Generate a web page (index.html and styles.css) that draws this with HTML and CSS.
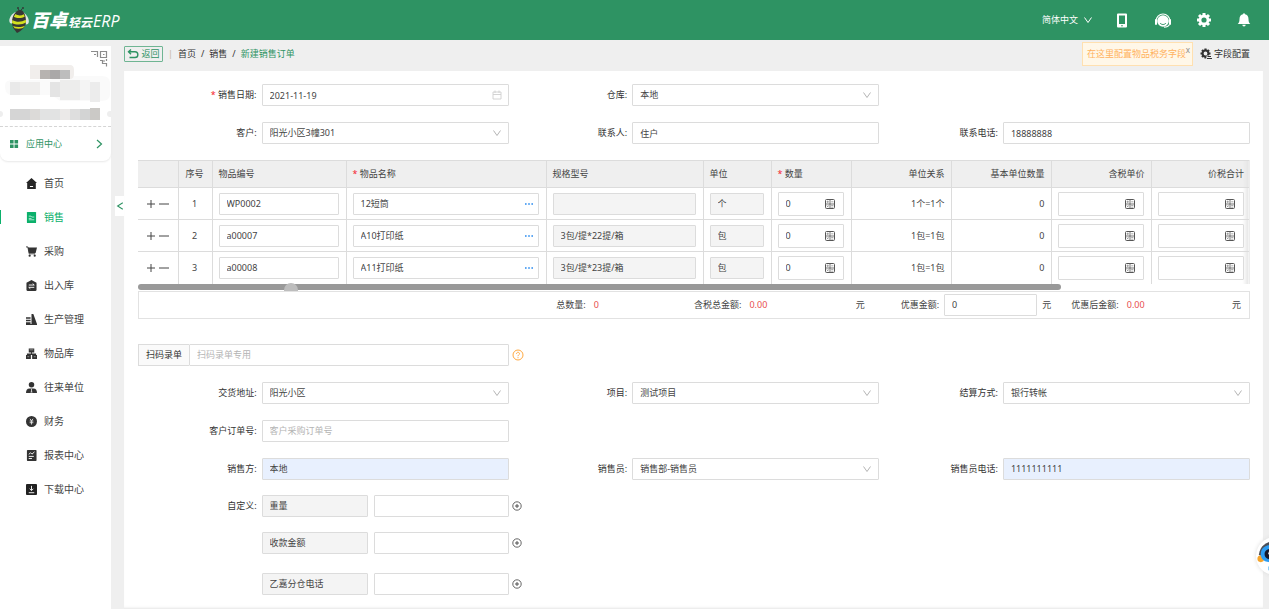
FILE: index.html
```html
<!DOCTYPE html>
<html lang="zh-CN">
<head>
<meta charset="utf-8">
<title>新建销售订单</title>
<link rel="stylesheet" href="styles.css">
</head>
<body>
<svg class="sprite" aria-hidden="true">
  <symbol id="down" viewBox="0 0 10 10"><path d="M1.500 2.500 5 7.500 8.500 2.500" fill="none" stroke="currentColor"/></symbol>
  <symbol id="calc" viewBox="0 0 12 12"><rect x="1.500" y="1.500" width="9" height="9" rx="1" fill="#fff" stroke="#555"/><path d="M6 1.500v9M1.500 6h9" fill="none" stroke="#666" stroke-width=".9"/><path d="M2.500 3.800h2.400M3.700 2.600V5M7.200 3.800h2.200M2.700 7.300l2 2M4.700 7.300l-2 2M7.200 7.500h2.200M7.200 9.200h2.200" fill="none" stroke="#777" stroke-width=".6"/></symbol>
  <symbol id="add" viewBox="0 0 10 10"><circle cx="5" cy="5" r="4.200" fill="none" stroke="#555" stroke-width=".9"/><path d="M5 3v4M3 5h4" stroke="#444" stroke-width=".9"/></symbol>
  <symbol id="plus" viewBox="0 0 10 10"><path d="M5 1v8M1 5h8" stroke="#444"/></symbol>
  <symbol id="minus" viewBox="0 0 10 10"><path d="M0 5h10" stroke="#444"/></symbol>
  <symbol id="dots" viewBox="0 0 10 10"><path d="M1 5h1.600M4.200 5h1.600M7.400 5H9" stroke="#2b8cf0" stroke-width="1.400"/></symbol>
  <symbol id="gear" viewBox="0 0 16 16"><circle cx="8" cy="8" r="4" fill="none" stroke="currentColor" stroke-width="2.800"/><path d="M8 1v2.500M8 12.500V15M1 8h2.500M12.500 8H15M3 3l1.800 1.800M11.200 11.200 13 13M3 13l1.800-1.800M11.200 4.800 13 3" stroke="currentColor" stroke-width="3"/></symbol>
  <symbol id="gearlist" viewBox="0 0 12 12"><circle cx="5.500" cy="5.500" r="2.900" fill="none" stroke="currentColor" stroke-width="2"/><path d="M5.500.5v2M5.500 8.500v2M.5 5.500h2M8.500 5.500h2M2 2l1.300 1.300M2 9l1.300-1.300M7.700 3.300 9 2" stroke="currentColor" stroke-width="2.200"/><path d="M6.500 7.500H12V12H6.500z" fill="#efefef"/><path d="M7.500 8.500H11M7 10.500h5" stroke="currentColor" stroke-width="1.200"/></symbol>
</svg>

<header class="topbar">
  <a class="brand" href="#">
    <svg class="bee" viewBox="0 0 20 28">
      <path d="M10.500 5 9 2.500M11.500 5l1.800-2.500" stroke="#333" stroke-width=".9"/>
      <circle cx="9" cy="2" r=".9" fill="#333"/><circle cx="14" cy="2" r=".9" fill="#333"/>
      <path d="M7 6C3 7 0 12 .3 15c.3 2.500 2.200 3 4 2.200z" fill="#dfe6e2"/>
      <path d="M14 6c3 2 6.200 6 5.800 10-.3 2.500-2.800 3-4 2.100z" fill="#dfe6e2"/>
      <path d="M11 4C7 4 3 10 3 16c0 6 3 8 5 11 4-2 9-6 9-11 0-6-2-12-6-12z" fill="#373735"/>
      <path d="M6.500 8c3 2 5.500 1.800 8.300.2l1 2.300c-3 2-8 2-11 .3zM3.300 14c4 2.400 9 2.400 13.500-.2l.2 2.800c-4 2.500-10 2.600-14 .4zM4 20c3.500 1.500 8.500 1.400 12.300-.5l-2.300 2.500c-2.500.9-5.600 1-8.300.3z" fill="#d2df1f"/>
    </svg>
    <span class="brand-name">百卓</span><span class="brand-sub">轻云</span><span class="brand-erp">ERP</span>
  </a>
  <nav class="tools" aria-label="工具">
    <button class="lang" type="button">简体中文<svg class="i10"><use href="#down"/></svg></button>
    <button type="button" aria-label="手机"><svg class="i16" viewBox="0 0 16 16"><path fill="#fff" fill-rule="evenodd" d="M4 1.500h8q1 0 1 1v12q0 1-1 1H4q-1 0-1-1v-12q0-1 1-1zm1 2v8.500h6V3.500zM8 13a.8.8 0 1 0 0 1.600.8.8 0 0 0 0-1.600z"/></svg></button>
    <button type="button" aria-label="客服"><svg class="i18" viewBox="0 0 18 18"><path d="M2 10a7 7 0 0 1 14 0" fill="none" stroke="#fff" stroke-width="1.200"/><circle cx="9" cy="10" r="5.800" fill="#fff"/><path d="M2 9v4M16 9v4" stroke="#fff" stroke-width="2" stroke-linecap="round"/><path d="M15.500 13.500c-1 2-3 2.700-5.500 2.700" fill="none" stroke="#fff" stroke-width="1.200"/><path d="M6 12c1.500 2 4.500 2 6 0" fill="none" stroke="#2e9363" stroke-width="1"/></svg></button>
    <button type="button" aria-label="设置"><svg class="i16"><use href="#gear"/></svg></button>
    <button type="button" aria-label="通知"><svg class="i16" viewBox="0 0 16 16"><path fill="#fff" d="M7 2.300a1 1 0 0 1 2 0c2.200.5 3.500 2.200 3.500 4.700 0 3 .7 4 1.800 5H1.700c1.100-1 1.800-2 1.800-5C3.500 4.500 4.800 2.800 7 2.300zM6.300 12.800h3.400a1.700 1.700 0 0 1-3.400 0z"/></svg></button>
  </nav>
</header>

<div class="shell">
  <aside class="side">
    <div class="account">
      <svg class="mosaic" viewBox="0 0 111 80">
        <path d="M5 40q0-6 7-6h38l10-4h42q8 0 8 8v10q0 7-8 7H60l-8-6H12q-7 0-7-9z" fill="#fafafa"/>
        <path d="M30 19h40q4 0 4 5v4q0 5-4 5H30z" fill="#f1eeec"/>
        <path d="M40 24h10v9H40z" fill="#b7b3b0"/><path d="M50 24h10v9H50z" fill="#aaa8a8"/><path d="M60 24h10v9H60z" fill="#bdbdbd"/>
        <path d="M10 36h10v13H10z" fill="#e9e9e9"/><path d="M20 36h20v13H20z" fill="#efeeed"/><path d="M50 36h10v15H50z" fill="#e4e4e4"/><path d="M60 34h20v20H60z" fill="#ededec"/><path d="M80 34h10v20H80z" fill="#f4f4f4"/><path d="M90 36h10v20H90z" fill="#ececec"/>
        <path d="M10 63h20v11H10z" fill="#d5d5d5"/><path d="M30 63h10v11H30z" fill="#dcdad8"/><path d="M40 63h20v11H40z" fill="#e2e3e3"/><path d="M60 63h10v11H60z" fill="#ebe9e8"/><path d="M70 63h10v11H70z" fill="#dedede"/><path d="M80 63h10v11H80z" fill="#d3d4d4"/><path d="M90 62h10v12H90z" fill="#cbc9c6"/>
        <circle cx="0" cy="68" r="3" fill="#eee"/><circle cx="110" cy="68" r="3" fill="#eee"/>
        <path d="M91 5.500h6.500v5.500M94 8.500h2M100.500 5.500h6v6h-6zM103 8.500h1.500M100 14.500h2.500v3h4v3M106.500 13v2M103 15h2" fill="none" stroke="#8c8c8c" stroke-width="1.200"/>
      </svg>
    </div>
    <a class="apps" href="#">
      <svg class="i10" viewBox="0 0 10 10"><path fill="#2e9363" d="M1 1h3.600v3.600H1zM5.500 1h3.600v3.600H5.500zM1 5.500h3.600v3.600H1zM5.500 5.500h3.600v3.600H5.500z"/></svg>
      <span>应用中心</span>
      <svg class="i10 apps-arrow" viewBox="0 0 10 10"><path d="M3 1l4.500 4L3 9" fill="none" stroke="#2e9363" stroke-width="1.200"/></svg>
    </a>
    <nav class="menu" aria-label="主菜单">
      <a href="#"><svg viewBox="0 0 12 12"><path fill="#262626" fill-rule="evenodd" d="M6 0 0 5.500h1.300V12h9.400V5.500H12zM4.300 8.800h3.400v1H4.300z"/></svg>首页</a>
      <a href="#" class="on"><svg viewBox="0 0 12 12"><rect x="1" width="10" height="12" rx=".6" fill="#0bb06b"/><path d="M3 4.500h2.500l.8 1H9M3 7h3M3 8.500h6" stroke="#c9f0df" stroke-width=".9" fill="none"/></svg>销售</a>
      <a href="#"><svg viewBox="0 0 12 12"><path d="M0 1h2l1.500 7.500H10" fill="none" stroke="#333"/><path d="M2 1.500h10L10.500 7.500H3.200z" fill="#333"/><circle cx="4" cy="10.500" r="1.200" fill="#333"/><circle cx="9.500" cy="10.500" r="1.200" fill="#333"/></svg>采购</a>
      <a href="#"><svg viewBox="0 0 12 12"><path fill="#333" d="M6 0 .5 3v7.500Q.5 12 2 12h8q1.500 0 1.500-1.500V3z"/><path d="M3 5.500h6L7.300 4M9 8H3l1.700 1.500" stroke="#fff" fill="none"/></svg>出入库</a>
      <a href="#"><svg viewBox="0 0 12 12"><path fill="#333" d="M6 0h2l4 11H6zM0 3.500h5v1.700H0zM0 6.200h5v1.700H0zM0 9h5v2H0zM0 11h12v1H0z"/></svg>生产管理</a>
      <a href="#"><svg viewBox="0 0 12 12"><path fill="#333" d="M3 .5h6V5H3zM0 7.500h5.300V12H0zM6.700 7.500H12V12H6.700zM5.500 5h1v1.500H5.500zM1 6h10v1.500H1z"/><path d="M4 2h4M1.500 9.500h2M8.500 9.500h2" stroke="#aaa" stroke-width=".8"/></svg>物品库</a>
      <a href="#"><svg viewBox="0 0 12 12"><circle cx="6" cy="3" r="3" fill="#333"/><path fill="#333" d="M0 12c0-3 1-5 4-5h4c3 0 4 2 4 5z"/><path d="M6 7.500v3.300M5 11h2" stroke="#fff" stroke-width=".8"/></svg>往来单位</a>
      <a href="#"><svg viewBox="0 0 12 12"><circle cx="6" cy="6" r="6" fill="#333"/><path d="M4.300 3 6 5.300 7.700 3M4 5.500h4M4 7.300h4M6 5.500v3.800" stroke="#eee" stroke-width=".9" fill="none"/></svg>财务</a>
      <a href="#"><svg viewBox="0 0 12 12"><rect x="1" width="10.500" height="12" rx=".8" fill="#333"/><path d="M3 4.800 5 3l1.500 1.500L9.300 2M3 7h5.500M3 9.300h3.500" stroke="#fff" fill="none"/></svg>报表中心</a>
      <a href="#"><svg viewBox="0 0 12 12"><rect width="12" height="12" rx="1" fill="#222"/><path d="M6 2v5M4 5.200l2 2 2-2M3 9.500h6" stroke="#fff" fill="none"/></svg>下载中心</a>
    </nav>
    <button class="fold" type="button" aria-label="收起菜单"><svg class="i8" viewBox="0 0 10 10"><path d="M8.500 1 2 5l6.500 4" fill="none" stroke="#2e9363" stroke-width="1.300"/></svg></button>
  </aside>

  <main class="main">
    <div class="crumbs">
      <button class="back" type="button"><svg class="i12" viewBox="0 0 12 12"><path d="M4 1.500 1.500 3.800 4 6.200M2 3.800h6a2.800 2.800 0 0 1 0 5.700H2.500" fill="none" stroke="#2e9363" stroke-width="1.400"/></svg>返回</button>
      <span class="bar">|</span>
      <a href="#">首页</a><span>/</span><a href="#">销售</a><span>/</span><span class="here">新建销售订单</span>
      <div class="tip">在这里配置物品税务字段<button class="tip-close" type="button" aria-label="关闭">x</button></div>
      <button class="config" type="button"><svg class="i12"><use href="#gearlist"/></svg>字段配置</button>
    </div>

    <form class="panel">
      <div class="fields">
        <div class="field"><label for="date"><i>*</i> 销售日期:</label><div class="box"><input id="date" value="2021-11-19"><svg class="i10 mark" viewBox="0 0 10 10"><path d="M1 2h8v7H1zM1 4.500h8M3 .5v2.500M7 .5v2.500" fill="none" stroke="#cfcfcf" stroke-width=".9"/></svg></div></div>
        <div class="field"><label for="store">仓库:</label><div class="box"><select id="store"><option>本地</option></select><svg class="i10 mark"><use href="#down"/></svg></div></div>
        <div class="field c1"><label for="cust">客户:</label><div class="box"><select id="cust"><option>阳光小区3幢301</option></select><svg class="i10 mark"><use href="#down"/></svg></div></div>
        <div class="field"><label for="contact">联系人:</label><div class="box"><input id="contact" value="住户"></div></div>
        <div class="field"><label for="phone">联系电话:</label><div class="box"><input id="phone" value="18888888"></div></div>
      </div>

      <div class="sheet">
        <table class="items">
          <colgroup><col class="w-op"><col class="w-no"><col class="w-code"><col class="w-name"><col class="w-spec"><col class="w-unit"><col class="w-qty"><col class="w-num"><col class="w-num"><col class="w-num"><col></colgroup>
          <thead><tr><th></th><th class="mid">序号</th><th>物品编号</th><th><i>*</i> 物品名称</th><th>规格型号</th><th>单位</th><th><i>*</i> 数量</th><th class="end">单位关系</th><th class="end">基本单位数量</th><th class="end">含税单价</th><th class="end">价税合计</th></tr></thead>
          <tbody>
            <tr>
              <td><div class="ops"><button type="button" aria-label="添加行"><svg class="i10"><use href="#plus"/></svg></button><button type="button" aria-label="删除行"><svg class="i10"><use href="#minus"/></svg></button></div></td>
              <td class="mid">1</td>
              <td><div class="box"><input aria-label="物品编号" value="WP0002"></div></td>
              <td><div class="box"><input aria-label="物品名称" value="12短筒"><button type="button" aria-label="选择物品"><svg class="i10"><use href="#dots"/></svg></button></div></td>
              <td><div class="box off"><input aria-label="规格型号" disabled></div></td>
              <td><div class="box off"><input aria-label="单位" value="个" disabled></div></td>
              <td><div class="box tall"><input aria-label="数量" value="0"><button type="button" aria-label="计算"><svg class="i12"><use href="#calc"/></svg></button></div></td>
              <td class="end">1个=1个</td><td class="end">0</td>
              <td><div class="box tall"><input aria-label="含税单价"><button type="button" aria-label="计算"><svg class="i12"><use href="#calc"/></svg></button></div></td>
              <td><div class="box tall"><input aria-label="价税合计"><button type="button" aria-label="计算"><svg class="i12"><use href="#calc"/></svg></button></div></td>
            </tr>
            <tr>
              <td><div class="ops"><button type="button" aria-label="添加行"><svg class="i10"><use href="#plus"/></svg></button><button type="button" aria-label="删除行"><svg class="i10"><use href="#minus"/></svg></button></div></td>
              <td class="mid">2</td>
              <td><div class="box"><input aria-label="物品编号" value="a00007"></div></td>
              <td><div class="box"><input aria-label="物品名称" value="A10打印纸"><button type="button" aria-label="选择物品"><svg class="i10"><use href="#dots"/></svg></button></div></td>
              <td><div class="box off"><input aria-label="规格型号" value="3包/提*22提/箱" disabled></div></td>
              <td><div class="box off"><input aria-label="单位" value="包" disabled></div></td>
              <td><div class="box tall"><input aria-label="数量" value="0"><button type="button" aria-label="计算"><svg class="i12"><use href="#calc"/></svg></button></div></td>
              <td class="end">1包=1包</td><td class="end">0</td>
              <td><div class="box tall"><input aria-label="含税单价"><button type="button" aria-label="计算"><svg class="i12"><use href="#calc"/></svg></button></div></td>
              <td><div class="box tall"><input aria-label="价税合计"><button type="button" aria-label="计算"><svg class="i12"><use href="#calc"/></svg></button></div></td>
            </tr>
            <tr>
              <td><div class="ops"><button type="button" aria-label="添加行"><svg class="i10"><use href="#plus"/></svg></button><button type="button" aria-label="删除行"><svg class="i10"><use href="#minus"/></svg></button></div></td>
              <td class="mid">3</td>
              <td><div class="box"><input aria-label="物品编号" value="a00008"></div></td>
              <td><div class="box"><input aria-label="物品名称" value="A11打印纸"><button type="button" aria-label="选择物品"><svg class="i10"><use href="#dots"/></svg></button></div></td>
              <td><div class="box off"><input aria-label="规格型号" value="3包/提*23提/箱" disabled></div></td>
              <td><div class="box off"><input aria-label="单位" value="包" disabled></div></td>
              <td><div class="box tall"><input aria-label="数量" value="0"><button type="button" aria-label="计算"><svg class="i12"><use href="#calc"/></svg></button></div></td>
              <td class="end">1包=1包</td><td class="end">0</td>
              <td><div class="box tall"><input aria-label="含税单价"><button type="button" aria-label="计算"><svg class="i12"><use href="#calc"/></svg></button></div></td>
              <td><div class="box tall"><input aria-label="价税合计"><button type="button" aria-label="计算"><svg class="i12"><use href="#calc"/></svg></button></div></td>
            </tr>
          </tbody>
        </table>
        <div class="track"><div class="thumb"></div><div class="grip"></div></div>
        <div class="sums">
          <div class="sum s1">总数量:<b>0</b></div>
          <div class="sum s2">含税总金额:<b>0.00</b><span class="yuan">元</span></div>
          <div class="sum s3"><label for="cut">优惠金额:</label><div class="box"><input id="cut" value="0"></div><span>元</span></div>
          <div class="sum s4">优惠后金额:<b>0.00</b><span class="yuan">元</span></div>
        </div>
      </div>

      <div class="fields scan-row">
        <div class="scan"><label for="scan">扫码录单</label><div class="box"><input id="scan" placeholder="扫码录单专用"></div></div>
        <button class="side-btn" type="button" aria-label="帮助"><svg class="i12" viewBox="0 0 12 12"><circle cx="6" cy="6" r="5" fill="none" stroke="#ffa940"/><path d="M4.500 4.800C4.500 2.800 7.500 2.800 7.500 4.700 7.500 5.900 6 5.900 6 7.200M6 8.200v1" fill="none" stroke="#ffa940"/></svg></button>
      </div>

      <div class="fields">
        <div class="field"><label for="addr">交货地址:</label><div class="box"><select id="addr"><option>阳光小区</option></select><svg class="i10 mark"><use href="#down"/></svg></div></div>
        <div class="field"><label for="proj">项目:</label><div class="box"><select id="proj"><option>测试项目</option></select><svg class="i10 mark"><use href="#down"/></svg></div></div>
        <div class="field"><label for="pay">结算方式:</label><div class="box"><select id="pay"><option>银行转帐</option></select><svg class="i10 mark"><use href="#down"/></svg></div></div>
        <div class="field c1"><label for="ono">客户订单号:</label><div class="box"><input id="ono" placeholder="客户采购订单号"></div></div>
        <div class="field c1"><label for="seller">销售方:</label><div class="box fill"><input id="seller" value="本地"></div></div>
        <div class="field"><label for="rep">销售员:</label><div class="box"><select id="rep"><option>销售部-销售员</option></select><svg class="i10 mark"><use href="#down"/></svg></div></div>
        <div class="field"><label for="reptel">销售员电话:</label><div class="box fill"><input id="reptel" value="1111111111"></div></div>
      </div>

      <div class="fields custom">
        <div class="field c1"><label for="k1">自定义:</label><div class="pair"><div class="box off"><input id="k1" value="重量" disabled></div><div class="box"><input aria-label="重量"></div></div></div>
        <button class="side-btn" type="button" aria-label="添加"><svg class="i10"><use href="#add"/></svg></button>
        <div class="field c1"><span></span><div class="pair"><div class="box off"><input aria-label="自定义名称" value="收款金额" disabled></div><div class="box"><input aria-label="收款金额"></div></div></div>
        <button class="side-btn" type="button" aria-label="添加"><svg class="i10"><use href="#add"/></svg></button>
        <div class="field c1 apart"><span></span><div class="pair"><div class="box off"><input aria-label="自定义名称" value="乙嘉分仓电话" disabled></div><div class="box"><input aria-label="乙嘉分仓电话"></div></div></div>
        <button class="side-btn apart" type="button" aria-label="添加"><svg class="i10"><use href="#add"/></svg></button>
      </div>
    </form>
  </main>
</div>

<button class="robot" type="button" aria-label="智能客服"><svg viewBox="0 0 40 40"><circle cx="5" cy="23" r="3.500" fill="#f6a52c"/><path d="M3 19C4 9 11 5 20 4v6L7 20z" fill="#4b4f58"/><path d="M5 18C5 10 12 8 20 8s15 2 15 10-7 9-15 9S5 26 5 18z" fill="#2c9cf2"/><path d="M9 18c0-5 5-6 11-6s11 1 11 6-5 6-11 6-11-1-11-6z" fill="#15182b"/><circle cx="15" cy="17" r="2" fill="#fff"/><circle cx="25" cy="17" r="2" fill="#fff"/><path d="M13 31h14v4H13z" fill="#4fb3f6"/></svg></button>
</body>
</html>
```
FILE: styles.css
```css
* { box-sizing: border-box; }
body {
  margin: 0;
  min-height: 100vh;
  display: flex;
  flex-direction: column;
  overflow: hidden;
  background: #efefef;
  color: #444;
  font: 9px/14px "Noto Sans", "Noto Sans CJK SC", sans-serif;
}
a { color: inherit; text-decoration: none; }
i { color: #f5222d; font-style: normal; }
button, input, select { font: inherit; color: inherit; }
button { border: 0; padding: 0; background: none; display: flex; align-items: center; }
svg { display: block; flex: none; }
.sprite { position: absolute; width: 0; height: 0; }
.i8 { width: 8px; height: 8px; }
.i10 { width: 10px; height: 10px; }
.i12 { width: 12px; height: 12px; }
.i16 { width: 16px; height: 16px; }
.i18 { width: 18px; height: 18px; }

/* top bar */
.topbar {
  height: 40px;
  display: flex;
  align-items: center;
  justify-content: space-between;
  padding: 0 17px 0 9px;
  background: #2e9363;
  color: #fff;
}
.brand { display: flex; align-items: baseline; font-style: italic; }
.bee { width: 20px; height: 28px; margin-right: 2px; align-self: flex-start; }
.brand-name { font-size: 18px; line-height: 28px; font-weight: 900; }
.brand-sub { font-size: 12px; font-weight: 700; margin-left: 1px; }
.brand-erp { font-family: "Open Sans", sans-serif; font-size: 16px; margin-left: 1px; }
.tools { display: flex; align-items: center; gap: 24px; }
.tools .lang { gap: 5px; margin-right: -3px; }

/* sidebar */
.shell { flex: 1; display: flex; padding-right: 6px; }
.side { position: relative; flex: none; width: 111px; margin: 6px 13px 0 0; background: #fff; }
.account { border-bottom: 1px dashed #d4d4d4; }
.mosaic { width: 100%; height: 80px; }
.apps {
  display: flex;
  align-items: center;
  height: 34px;
  padding: 0 7px 0 9px;
  gap: 7px;
  color: #2e9363;
  border-radius: 0 0 8px 8px;
  box-shadow: 0 1px 2px #e8e8e8;
}
.apps-arrow { margin-left: auto; }
.menu { padding-top: 5px; font-size: 10px; }
.menu a { display: flex; align-items: center; height: 34px; padding-left: 26px; gap: 7px; }
.menu svg { width: 11px; height: 11px; }
.menu .on { color: #0bb06b; background: linear-gradient(#0bb06b, #0bb06b) left / 1px 14px no-repeat; }
.fold { position: absolute; left: 115px; top: 150px; width: 9px; height: 20px; background: #fff; justify-content: center; }

/* breadcrumb row */
.main { flex: 1; min-width: 0; display: flex; flex-direction: column; }
.crumbs { display: flex; align-items: center; gap: 5px; height: 31px; padding: 0 13px 4px 0; color: #333; }
.back { height: 16px; width: 39px; gap: 2px; justify-content: center; border: 1px solid #6fb593; border-radius: 1px; color: #2e9363; }
.bar { color: #c5b89e; }
.here { color: #2e9363; }
.tip {
  position: relative;
  margin-left: auto;
  padding: 4px 6px 4px 4px;
  border: 1px solid #ffe0b0;
  background: #fff7e8;
  color: #ffb25e;
}
.tip-close { position: absolute; right: 2px; top: 0; color: #888; font-size: 8px; }
.config { gap: 2px; margin-left: 2px; }

/* form panel */
.panel { flex: 1; padding: 13px 13px 14px 14px; background: #fff; box-shadow: inset 0 -3px 3px -2px #e4e4e4; }
.fields { display: grid; grid-template-columns: repeat(3, minmax(0, 1fr)); row-gap: 16px; }
.field { display: grid; grid-template-columns: 1fr 2fr; align-items: center; }
.field label { text-align: right; padding-right: 5px; color: #333; }
.c1 { grid-column: 1; }
.box {
  position: relative;
  display: flex;
  align-items: center;
  min-width: 0;
  height: 22px;
  border: 1px solid #dcdcdc;
  border-radius: 1px;
  background: #fff;
}
.box input, .box select {
  flex: 1;
  min-width: 0;
  width: 100%;
  height: 100%;
  padding: 0 7px;
  border: 0;
  outline: 0;
  appearance: none;
  background: none;
  color: #444;
}
.box input::placeholder { color: #b4b4b4; }
.box button { flex: none; padding-right: 4px; }
.box .mark { position: absolute; right: 6px; color: #b5b5b5; pointer-events: none; }
.off { background: #f4f4f4; }
.fill { background: #e8f0fe; }
.tall { height: 24px; }
.tall button { padding-right: 7px; }

/* item table */
.sheet { margin: 16px 0 25px; }
.items { width: 100%; table-layout: fixed; border-collapse: collapse; border-top: 1px solid #dcdcdc; }
.items th, .items td { padding: 0 7px 0 6px; text-align: left; font-weight: 400; border-right: 1px solid #dcdcdc; }
.items th { height: 27px; background: #efefef; }
.items td { height: 32px; border-top: 1px solid #dcdcdc; }
.items th:last-child, .items td:last-child { padding-right: 5px; border-color: #dcdcdc #ececec; background-image: linear-gradient(to left, #e6e6e6, transparent 6px); }
.items .mid { text-align: center; }
.items .end { text-align: right; padding-right: 6px; }
.w-op { width: 40px; }
.w-no { width: 34px; }
.w-code { width: 134px; }
.w-name { width: 200px; }
.w-spec { width: 157px; }
.w-unit { width: 68px; }
.w-qty { width: 80px; }
.w-num { width: 100px; }
.ops { display: flex; gap: 3px; justify-content: center; }
.track { position: relative; height: 7px; }
.thumb { width: 83%; height: 6px; border-radius: 3px; background: #999; }
.grip { position: absolute; left: 146px; bottom: 0; width: 14px; height: 8px; border-radius: 7px 7px 0 0; background: #bdbdbd; }
.sums {
  display: grid;
  grid-template-columns: 418fr 138fr 171fr 36fr 151fr 20fr 170fr 8fr;
  align-items: center;
  height: 28px;
  border: 1px solid #e2e2e2;
}
.sum { display: flex; align-items: center; white-space: nowrap; }
.sum b { margin-left: 8px; font-weight: 400; color: #e8504f; }
.sum .box { flex: 1; margin: 0 5px; }
.yuan { margin-left: auto; }
.s1 { grid-column: 2; }
.s2 { grid-column: 3; }
.s3 { grid-column: 5; }
.s4 { grid-column: 7; }

/* scan and custom rows */
.scan-row { margin-bottom: 16px; }
.scan { display: flex; }
.scan label { width: 51px; line-height: 20px; text-align: center; border: 1px solid #dcdcdc; border-right: 0; background: #fafafa; color: #333; }
.scan .box { flex: 1; }
.side-btn { justify-self: start; margin-left: 3px; }
.custom { margin-top: 15px; row-gap: 15px; }
.pair { display: grid; grid-template-columns: 107fr 135fr; gap: 6px; }
.apart { margin-top: 4px; }

/* floating assistant */
.robot {
  position: fixed;
  right: -25px;
  bottom: 34px;
  width: 38px;
  height: 38px;
  border-radius: 50%;
  background: #fff;
  box-shadow: 0 0 4px #ddd;
}
.robot svg { width: 38px; height: 38px; }
```
